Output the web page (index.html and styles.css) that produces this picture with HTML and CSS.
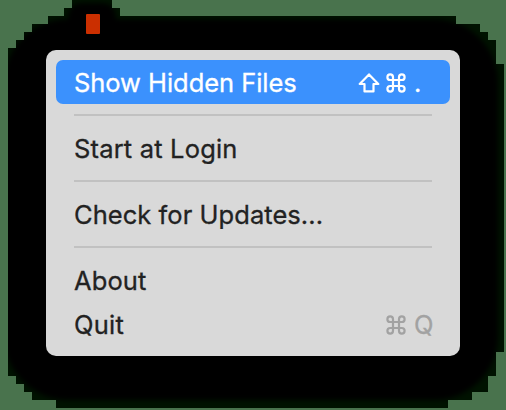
FILE: index.html
```html
<!DOCTYPE html>
<html lang="en">
<head>
<meta charset="utf-8">
<title>Menu</title>
<link rel="stylesheet" href="styles.css">
</head>
<body>
<svg class="shadow" viewBox="0 0 506 410" aria-hidden="true">
  <defs>
    <filter id="soft" x="-10%" y="-10%" width="120%" height="120%"><feGaussianBlur stdDeviation="2.5"/></filter>
    <clipPath id="steps"><path d="M72 0H112V8H120V16H456V24H480V32H488V40H496V64H504V352H496V376H488V392H472V400H448V408H56V400H32V392H24V384H16V376H8V48H16V40H24V32H32V24H48V16H64V8H72Z"/></clipPath>
  </defs>
  <g clip-path="url(#steps)">
    <rect width="506" height="410" fill="#001200"/>
    <g filter="url(#soft)"><rect x="4" y="19" width="494" height="381" rx="64"/><rect x="68" y="3" width="48" height="50" rx="14"/></g>
  </g>
</svg>
<main class="screen">
  <div class="marker"></div>
  <div class="menu" role="menu">
    <div class="item selected" role="menuitem"><span class="show">Show Hidden Files</span>
      <span class="keys">
        <svg class="shift" viewBox="0 0 22 20"><path d="M11 1.4 20.3 11H15.5V18.4H6.5V11H1.7Z"/></svg>
        <svg class="cmd" viewBox="0 0 20 20"><path d="M7 7V4.2A2.8 2.8 0 1 0 4.2 7H15.8A2.8 2.8 0 1 0 13 4.2V15.8A2.8 2.8 0 1 0 15.8 13H4.2A2.8 2.8 0 1 0 7 15.8Z"/></svg>
        <span class="key">.</span>
      </span>
    </div>
    <hr>
    <div class="item" role="menuitem"><span class="start">Start at Login</span></div>
    <hr>
    <div class="item" role="menuitem"><span class="check">Check for Updates...</span></div>
    <hr>
    <div class="item" role="menuitem"><span class="about">About</span></div>
    <div class="item" role="menuitem"><span class="quit">Quit</span>
      <span class="keys dim">
        <svg class="cmd" viewBox="0 0 20 20"><path d="M7 7V4.2A2.8 2.8 0 1 0 4.2 7H15.8A2.8 2.8 0 1 0 13 4.2V15.8A2.8 2.8 0 1 0 15.8 13H4.2A2.8 2.8 0 1 0 7 15.8Z"/></svg>
        <span class="key">Q</span>
      </span>
    </div>
  </div>
</main>
</body>
</html>
```
FILE: styles.css
```css
* { box-sizing: border-box; }
body { margin: 0; background: #49734d; width: 506px; height: 410px; overflow: hidden; font-family: Inter, "Liberation Sans", sans-serif; }
.shadow { position: absolute; inset: 0; width: 506px; height: 410px; }
.screen { position: relative; padding: 14px 46px 0; }
.marker { width: 14px; height: 20px; margin: 0 0 16px 40px; background: #cb2f00; border-radius: 1px; }
.menu { width: 414px; height: 306px; padding: 10px; border-radius: 10px; background: #d9d9d9; }
.item { height: 44px; padding: 2px 16px 0 18px; display: flex; align-items: center; justify-content: space-between; border-radius: 7px; font-size: 25.5px; line-height: 44px; color: #222; white-space: nowrap; -webkit-text-stroke: 0.3px currentColor; }
.show { letter-spacing: -0.05px; }
.start { letter-spacing: 0.18px; }
.check { letter-spacing: 0.05px; }
.about { letter-spacing: 0.1px; }
.quit { letter-spacing: 0.25px; }
.selected { background: #3b91fd; color: #fff; }
hr { height: 2px; margin: 10px 18px; border: 0; background: #c1c1c1; }
.keys { display: flex; align-items: center; }
.keys svg { fill: none; stroke: currentColor; stroke-width: 2.2; stroke-linejoin: round; }
.shift { width: 22px; height: 20px; margin-right: 6px; }
.cmd { width: 20px; height: 20px; margin-right: 8px; }
.key { width: 20px; }
.dim { color: #a2a2a2; }
```
